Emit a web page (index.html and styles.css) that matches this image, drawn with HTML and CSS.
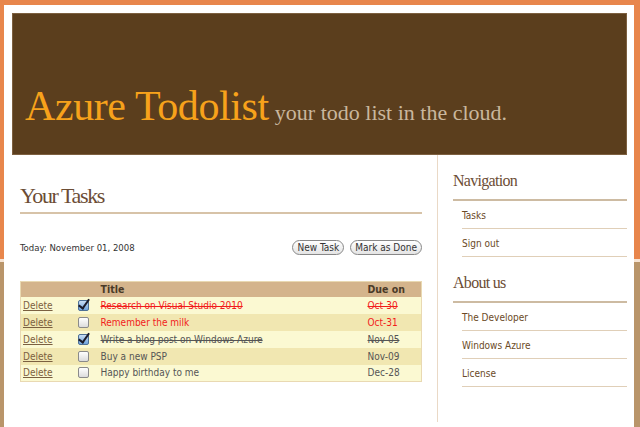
FILE: index.html
```html
<!DOCTYPE html>
<html lang="en">
<head>
    <meta charset="UTF-8">
    <title>Azure Todolist</title>
    <link rel="stylesheet" href="styles.css">
</head>
<body>
    <div class="page">
        <header class="masthead">
            <h1>Azure Todolist</h1>
            <span class="tagline">your todo list in the cloud.</span>
        </header>
        <div class="columns">
            <section class="content">
                <h2>Your Tasks</h2>
                <div class="toolbar">
                    <span class="today">Today: November 01, 2008</span>
                    <div class="actions">
                        <button class="pill">New Task</button>
                        <button class="pill">Mark as Done</button>
                    </div>
                </div>
                <table class="tasks">
                    <thead>
                        <tr>
                            <th class="c-del"></th>
                            <th class="c-box"></th>
                            <th>Title</th>
                            <th class="c-due">Due on</th>
                        </tr>
                    </thead>
                    <tbody>
                        <tr class="overdue done">
                            <td><a href="#">Delete</a></td>
                            <td><span class="box checked"></span></td>
                            <td class="title">Research on Visual Studio 2010</td>
                            <td class="due">Oct-30</td>
                        </tr>
                        <tr class="overdue">
                            <td><a href="#">Delete</a></td>
                            <td><span class="box"></span></td>
                            <td class="title">Remember the milk</td>
                            <td class="due">Oct-31</td>
                        </tr>
                        <tr class="done">
                            <td><a href="#">Delete</a></td>
                            <td><span class="box checked"></span></td>
                            <td class="title">Write a blog post on Windows Azure</td>
                            <td class="due">Nov-05</td>
                        </tr>
                        <tr>
                            <td><a href="#">Delete</a></td>
                            <td><span class="box"></span></td>
                            <td class="title">Buy a new PSP</td>
                            <td class="due">Nov-09</td>
                        </tr>
                        <tr>
                            <td><a href="#">Delete</a></td>
                            <td><span class="box"></span></td>
                            <td class="title">Happy birthday to me</td>
                            <td class="due">Dec-28</td>
                        </tr>
                    </tbody>
                </table>
            </section>
            <aside class="sidebar">
                <h3>Navigation</h3>
                <ul>
                    <li><a href="#">Tasks</a></li>
                    <li><a href="#">Sign out</a></li>
                </ul>
                <h3>About us</h3>
                <ul>
                    <li><a href="#">The Developer</a></li>
                    <li><a href="#">Windows Azure</a></li>
                    <li><a href="#">License</a></li>
                </ul>
            </aside>
        </div>
    </div>
</body>
</html>
```

FILE: styles.css
```css
* {
    margin: 0;
    padding: 0;
    box-sizing: border-box;
}

body {
    height: 427px;
    overflow: hidden;
    font-family: "DejaVu Sans Condensed", "DejaVu Sans", sans-serif;
    background: linear-gradient(to bottom, #e8864c 0, #e8864c 259px, #f6e4d4 259px, #f6e4d4 262px, #b9956a 262px);
}

.page {
    width: 630px;
    height: 422px;
    margin: 5px 0 0 4px;
    padding: 8px 7px 0 8px;
    background-color: #fff;
}

.masthead {
    height: 142px;
    background-color: #5b3e1d;
    border: 1px solid #7d6040;
    display: flex;
    align-items: baseline;
    padding: 68px 0 0 12px;
}

.masthead h1 {
    font-family: "Liberation Serif", serif;
    font-weight: normal;
    font-size: 42px;
    letter-spacing: -0.4px;
    color: #f7a21b;
}

.tagline {
    font-family: "Liberation Serif", serif;
    font-size: 22px;
    color: #c9b79d;
    margin-left: 6px;
}

.columns {
    display: flex;
    height: 267px;
}

.content {
    width: 426px;
    padding: 28px 15px 0 8px;
    border-right: 1px solid #ead9c6;
}

.content h2 {
    font-family: "Liberation Serif", serif;
    font-weight: normal;
    font-size: 22px;
    letter-spacing: -1.4px;
    color: #6c4d35;
    padding-bottom: 3px;
    border-bottom: 2px solid #d7c3a8;
}

.toolbar {
    display: flex;
    justify-content: space-between;
    align-items: center;
    margin-top: 25px;
    height: 17px;
}

.today {
    font-size: 9.5px;
    color: #333;
}

.actions {
    display: flex;
    gap: 6px;
}

.pill {
    font-family: "DejaVu Sans Condensed", sans-serif;
    font-size: 10px;
    color: #333;
    height: 15px;
    padding: 0 4px;
    border: 1px solid #888;
    border-radius: 8px;
    background: linear-gradient(to bottom, #fff, #e4e4e4);
}

.tasks {
    width: 100%;
    margin-top: 25px;
    border-collapse: collapse;
    border: 1px solid #e9d9b2;
    font-size: 10px;
    color: #555;
}

.tasks th {
    background-color: #d4b48c;
    color: #4a3a28;
    text-align: left;
    font-weight: bold;
    font-size: 10.5px;
    height: 15px;
    padding: 0 2px;
}

.tasks td {
    height: 17px;
    padding: 0 2px;
    background-color: #fbf9d2;
}

.tasks tbody tr:nth-child(even) td {
    background-color: #f1e7b1;
}

.c-del {
    width: 54px;
}

.c-box {
    width: 24px;
}

.c-due {
    width: 56px;
}

.tasks a {
    color: #7b6040;
}

.overdue .title,
.overdue .due {
    color: #f21c1c;
}

.done .title,
.done .due {
    text-decoration: line-through;
}

.box {
    display: block;
    position: relative;
    width: 11px;
    height: 11px;
    margin-left: 1px;
    border: 1px solid #8a8a8a;
    border-radius: 2px;
    background: linear-gradient(to bottom, #fff, #dcdcdc);
}

.box.checked {
    background: linear-gradient(to bottom, #c9def4, #6fa3dc);
    border-color: #4d6f95;
}

.box.checked::after {
    content: "";
    position: absolute;
    left: 2px;
    top: -4px;
    width: 4px;
    height: 10px;
    border: solid #1b1b2a;
    border-width: 0 2px 2px 0;
    transform: rotate(35deg);
}

.sidebar {
    flex: 1;
    padding: 17px 0 0 15px;
}

.sidebar h3 {
    font-family: "Liberation Serif", serif;
    font-weight: normal;
    font-size: 16px;
    letter-spacing: -0.7px;
    color: #6c4d35;
    padding-bottom: 9px;
    border-bottom: 2px solid #cdbba2;
}

.sidebar ul {
    list-style: none;
    padding-left: 9px;
    margin-bottom: 17px;
}

.sidebar li {
    border-bottom: 1px solid #e0cfb8;
    height: 28px;
    padding-top: 3px;
}

.sidebar li a {
    font-size: 10px;
    color: #6b4a26;
    text-decoration: none;
}
```
